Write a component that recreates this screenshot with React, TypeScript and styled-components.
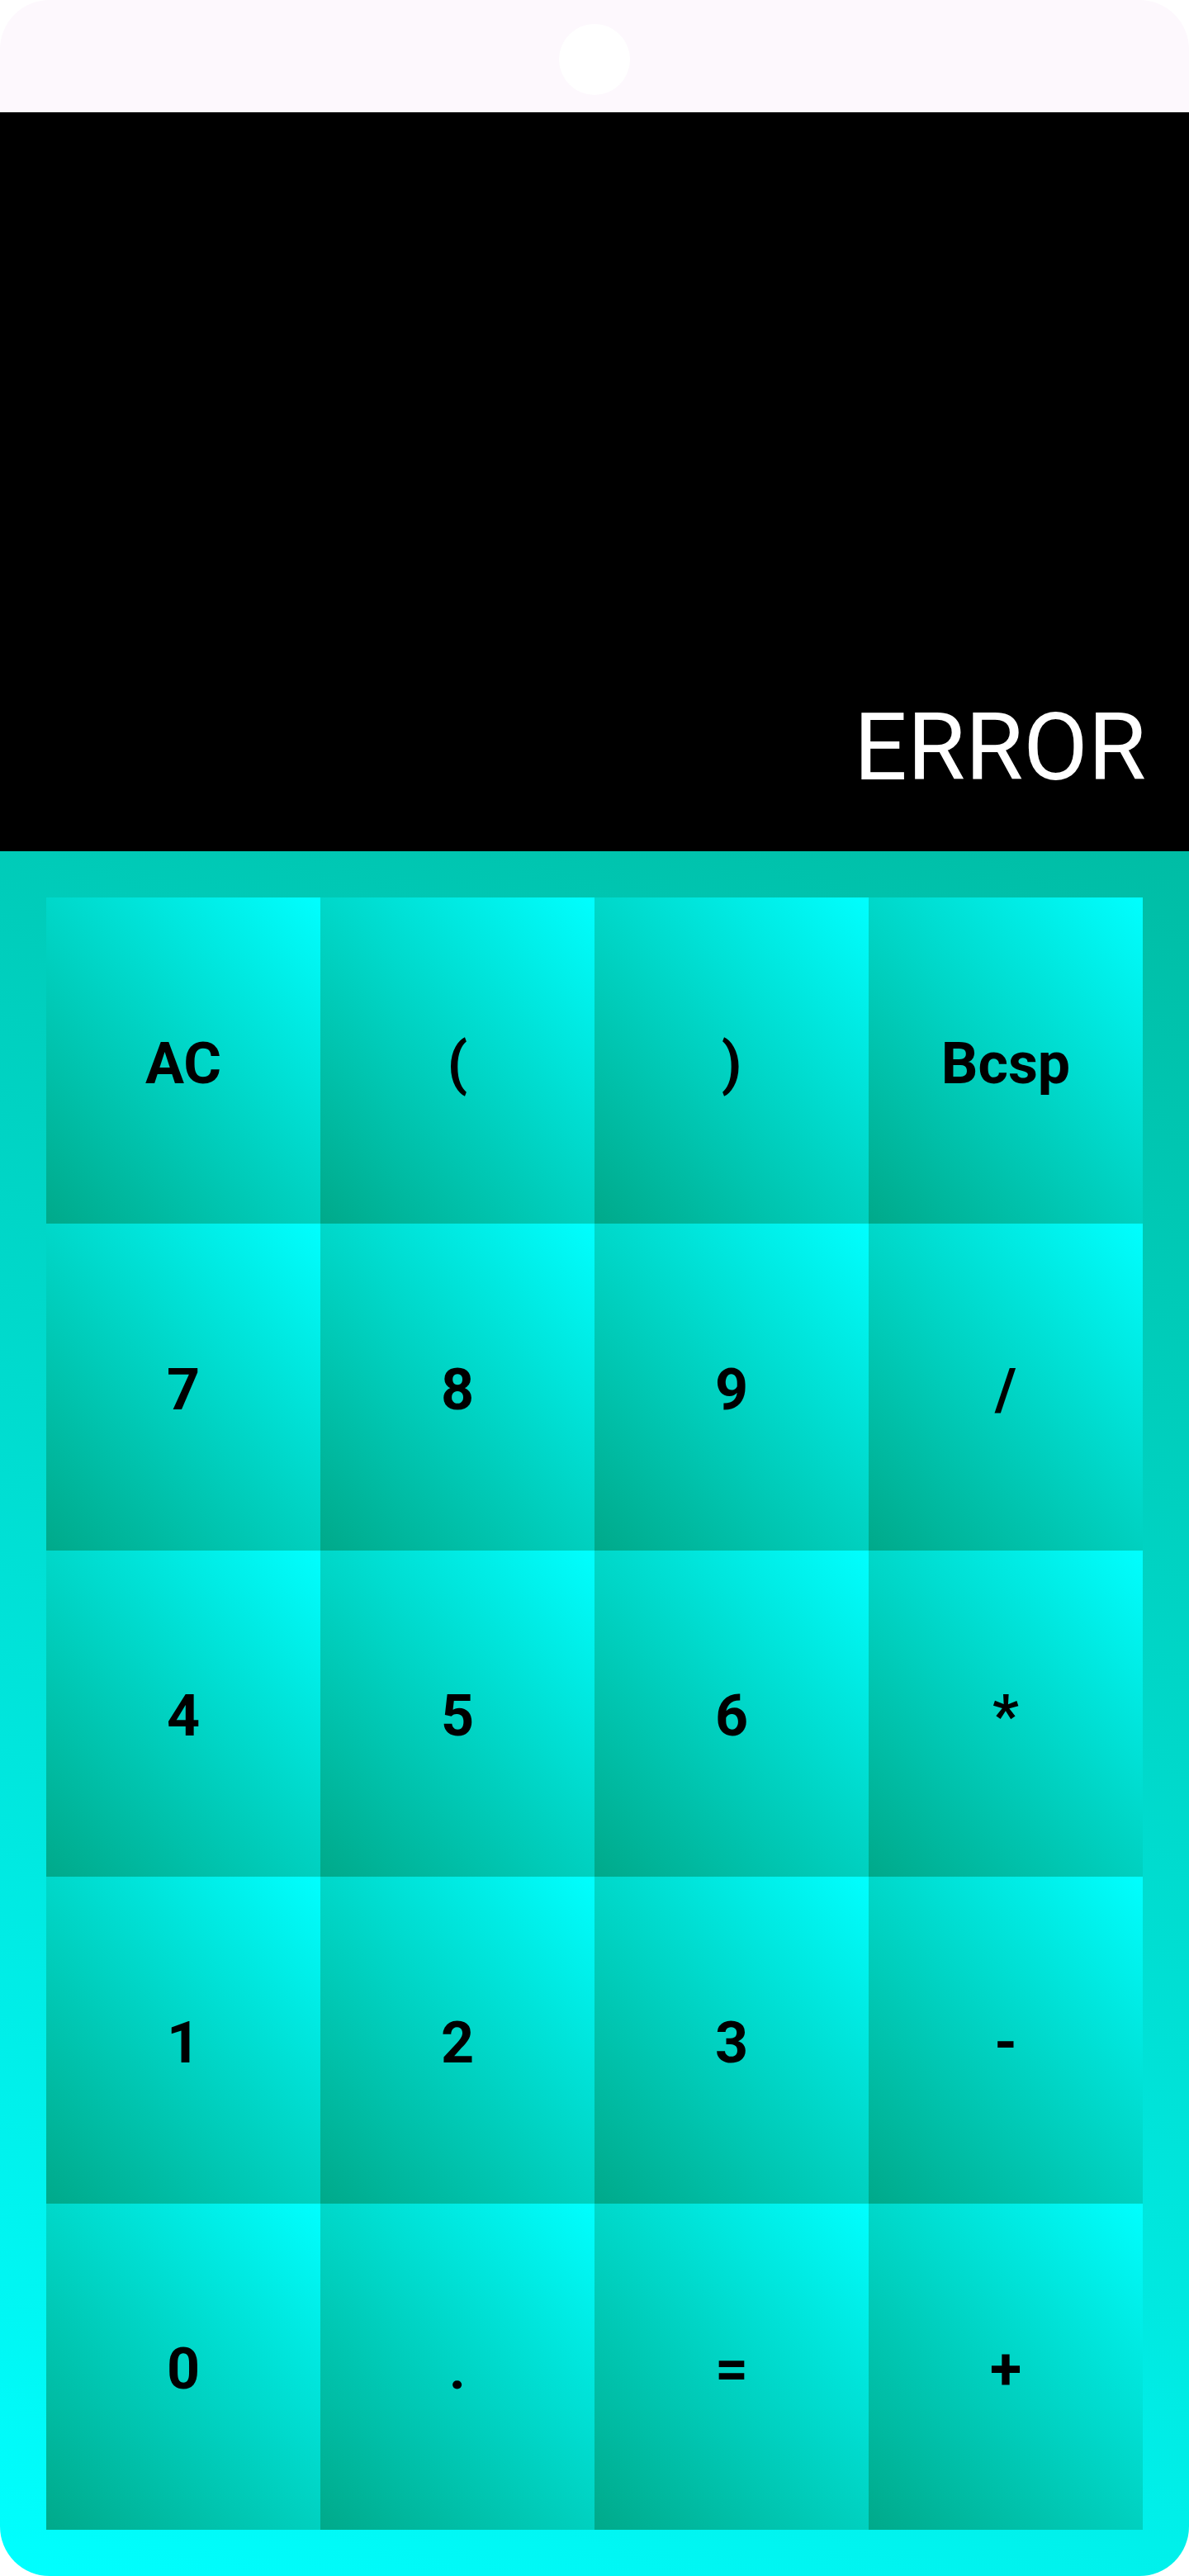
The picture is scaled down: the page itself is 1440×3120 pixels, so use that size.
import React from "react";
import styled, { createGlobalStyle } from "styled-components";

const GlobalStyle = createGlobalStyle`
  html, body {
    margin: 0;
    padding: 0;
    background: #ffffff;
    overflow: hidden;
  }
  * { box-sizing: border-box; }
`;

const Phone = styled.div`
  width: 1440px;
  height: 3120px;
  border-radius: 60px;
  overflow: hidden;
  display: flex;
  flex-direction: column;
  font-family: Roboto, "Liberation Sans", sans-serif;
`;

const StatusBar = styled.div`
  height: 136px;
  flex: 0 0 136px;
  background: #fdf8fd;
  display: flex;
  align-items: center;
  justify-content: center;
  padding-top: 8px;
`;

const Camera = styled.div`
  width: 86px;
  height: 86px;
  border-radius: 50%;
  background: #ffffff;
`;

const Display = styled.div`
  flex: 0 0 895px;
  background: #000000;
  display: flex;
  align-items: flex-end;
  justify-content: flex-end;
  padding: 0 52px 69px 56px;
`;

const Result = styled.div`
  color: #ffffff;
  font-size: 114px;
  font-weight: 400;
  line-height: 1;
`;

const Keypad = styled.div`
  flex: 1 1 auto;
  background: linear-gradient(22deg, #00ffff 0%, #00bda5 100%);
  padding: 56px;
  display: grid;
  grid-template-columns: repeat(4, 1fr);
  grid-template-rows: repeat(5, 1fr);
`;

const Key = styled.button`
  border: none;
  margin: 0;
  padding: 6px 0 0;
  background: linear-gradient(45deg, #00a98a 0%, #00ffff 100%);
  color: #000000;
  font-family: Roboto, "Liberation Sans", sans-serif;
  font-size: 70px;
  font-weight: 700;
  display: flex;
  align-items: center;
  justify-content: center;
  cursor: pointer;
`;

const keys = [
  "AC", "(", ")", "Bcsp",
  "7", "8", "9", "/",
  "4", "5", "6", "*",
  "1", "2", "3", "-",
  "0", ".", "=", "+",
];

export default function App() {
  return (
    <>
      <GlobalStyle />
      <Phone>
        <StatusBar>
          <Camera />
        </StatusBar>
        <Display>
          <Result>ERROR</Result>
        </Display>
        <Keypad>
          {keys.map((k) => (
            <Key key={k}>{k}</Key>
          ))}
        </Keypad>
      </Phone>
    </>
  );
}
